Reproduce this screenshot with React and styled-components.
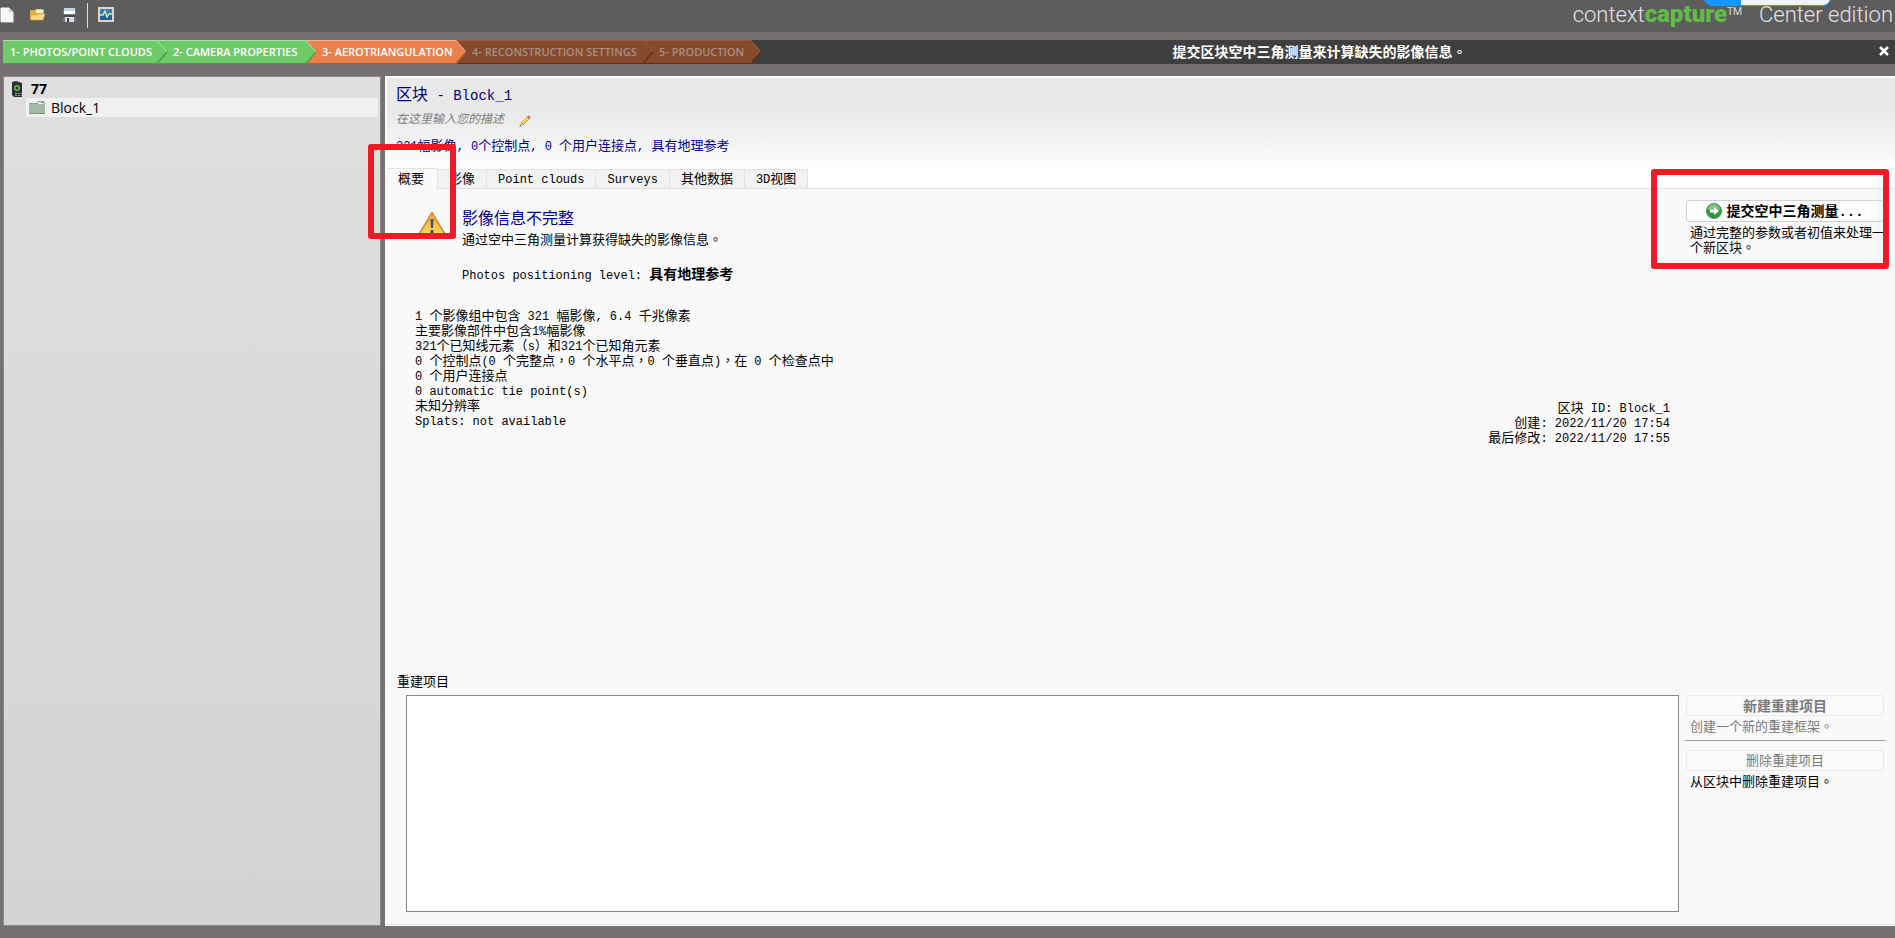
import React from 'react';
import styled, { createGlobalStyle, css } from 'styled-components';

const GlobalStyle = createGlobalStyle`
  *, *::before, *::after { box-sizing: border-box; }
  body {
    margin: 0;
    background: #757170;
    color: #000;
    font-family: "Liberation Sans", "Noto Sans CJK SC", sans-serif;
    font-size: 13px;
    line-height: 15px;
  }
  h1, h2, p, ul, ol, dl, dd { margin: 0; padding: 0; font-weight: normal; }
  ul, ol { list-style: none; }
  button { margin: 0; padding: 0; border: 0; background: none; color: inherit; font: inherit; }
`;

const Latin = styled.span`
  font-family: "Liberation Mono", monospace;
  font-size: ${(p) => p.$size}px;
  line-height: 0;
  white-space: pre-wrap;
`;

const Punctuation = styled.span`
  font-family: "Liberation Sans", "Noto Sans CJK TC", sans-serif;
  line-height: 0;
`;

/* Sets half-width runs in the fixed-width face and centres full-width stops. */
function Mixed({ children, size = 12 }) {
  return children
    .split(/([\x20-\x7e]+|[，。]+)/)
    .filter(Boolean)
    .map((run, i) => {
      if (/^[\x20-\x7e]/.test(run)) return <Latin key={i} $size={size}>{run}</Latin>;
      if (/^[，。]/.test(run)) return <Punctuation key={i} lang="zh-TW">{run}</Punctuation>;
      return run;
    });
}

const Window = styled.div`
  position: relative;
  display: flex;
  flex-direction: column;
  min-height: 100vh;
  padding-bottom: 12px;
  overflow: hidden;
`;

const Toolbar = styled.header`
  display: flex;
  align-items: center;
  justify-content: space-between;
  height: 32px;
  background: #5d5d5d;
`;

const Tools = styled.div`
  display: flex;
  align-items: center;
  height: 30px;
  align-self: flex-start;
`;

const ToolButton = styled.button`
  display: flex;
  align-items: flex-end;
  width: 16px;
  height: 16px;
  margin-right: ${(p) => p.$gap ?? 16}px;
`;

const ToolDivider = styled.span`
  width: 1px;
  height: 25px;
  margin-right: 10px;
  background: #dcdcdc;
`;

const Brand = styled.div`
  display: flex;
  align-items: baseline;
  padding: 0 2px 3px 0;
  color: #e2e2e2;
  font-family: Roboto, sans-serif;
  font-size: 22px;
  font-weight: 300;
  line-height: 24px;
`;

const BrandStrong = styled.strong`
  color: #62bd45;
  font-size: 24px;
  font-weight: 900;
`;

const Trademark = styled.span`
  align-self: flex-start;
  font-family: "Open Sans", sans-serif;
`;

const Edition = styled.span`
  margin-left: 16px;
`;

const FloatingChip = styled.div`
  position: absolute;
  top: -10px;
  right: 64px;
  width: 127px;
  height: 16px;
  border: 1px solid #1b9bf0;
  border-radius: 8px;
  background: linear-gradient(90deg, #1496ff 36px, #eef7ff 36px);
`;

const WorkflowBar = styled.nav`
  display: flex;
  align-items: center;
  height: 24px;
  margin: 8px 0 12px 3px;
  background: #3f3f3f;
  color: #fff;
`;

const Steps = styled.ol`
  display: flex;
  flex: none;
`;

const tones = {
  done: { fill: '#6fca69', light: '#a9e2a4', dark: '#519b4c', text: '#fff' },
  current: { fill: '#ea804b', light: '#f9b592', dark: '#b45a2c', text: '#fff' },
  pending: { fill: '#864a2c', light: '#9c5b3d', dark: '#5f3019', text: '#a48f84' },
};

const StepItem = styled.li`
  position: relative;
  display: flex;
  z-index: ${(p) => p.$layer};
  margin-right: -11px;
`;

const StepButton = styled.button`
  height: 24px;
  width: ${(p) => p.$width}px;
  padding-left: ${(p) => (p.$first ? 7 : 16)}px;
  border-top: 1px solid ${(p) => tones[p.$tone].light};
  border-bottom: 1px solid ${(p) => tones[p.$tone].dark};
  background: ${(p) => tones[p.$tone].fill};
  color: ${(p) => tones[p.$tone].text};
  font-family: "Open Sans", sans-serif;
  font-size: 11px;
  font-weight: 600;
  line-height: 22px;
  text-align: left;
  white-space: nowrap;
`;

const Message = styled.p`
  flex: 1;
  padding-left: 10px;
  text-align: center;
  font-size: 14px;
  font-weight: 700;
  line-height: 24px;
`;

const CloseButton = styled.button`
  display: flex;
  margin-right: 5px;
`;

const Workspace = styled.div`
  display: flex;
  flex: 1;
  gap: 4px;
  padding-left: 3px;
`;

const Sidebar = styled.aside`
  width: 378px;
  flex: none;
  padding: 2px;
  border: 1px solid #8a8786;
  background: linear-gradient(#dfdfdf, #d3d3d3);
  font-family: "Open Sans", sans-serif;
  font-size: 14px;
  line-height: 19px;
`;

const TreeRow = styled.li`
  display: flex;
  align-items: center;
  height: 19px;
  margin-left: ${(p) => p.$indent}px;
  gap: ${(p) => p.$gap}px;
  padding-left: ${(p) => p.$pad}px;
  font-weight: ${(p) => (p.$root ? 700 : 400)};
  ${(p) => p.$selected && css`background: #f0f0f0;`}
`;

const Panel = styled.main`
  display: flex;
  flex: 1;
  flex-direction: column;
  min-width: 0;
  border: 1px solid #fff;
  border-width: 2px 0 1px 2px;
  background: #f9f9f9;
`;

const PanelHead = styled.div`
  padding-top: 6px;
  background: linear-gradient(#e9e9e9 30%, #fff 85%);
`;

const BlockTitle = styled.h1`
  padding-left: 9px;
  color: #00008b;
  font-size: 16px;
  line-height: 22px;
`;

const Description = styled.div`
  display: flex;
  align-items: center;
  gap: 15px;
  height: 26px;
  padding-left: 9px;
  color: #7d7d7d;
  font-size: 12px;
  font-style: italic;
`;

const Summary = styled.p`
  padding: 6px 0 0 9px;
  color: #00008b;
  line-height: 16px;
`;

const Tabs = styled.div`
  display: flex;
  align-items: flex-end;
  height: 35px;
  border-bottom: 1px solid #e2e2e2;
`;

const Tab = styled.button`
  height: 19px;
  padding: 0 11px;
  border: 1px solid #e2e2e2;
  border-width: 1px 1px 0 0;
  background: #f2f2f2;
  line-height: 18px;
  ${(p) => p.$active && css`
    height: 21px;
    margin-bottom: -1px;
    padding-right: 13px;
    background: #f9f9f9;
  `}
`;

const Content = styled.div`
  display: flex;
  flex: 1;
  flex-direction: column;
  border-bottom: 1px solid #e2e2e2;
`;

const Columns = styled.div`
  display: flex;
  flex: ${(p) => (p.$grow ? 1 : 'none')};
`;

const MainColumn = styled.div`
  flex: 1;
  min-width: 0;
`;

const ActionColumn = styled.div`
  flex: none;
  width: 216px;
  padding: ${(p) => p.$top}px 11px 0 7px;
`;

const Notice = styled.section`
  display: flex;
  gap: 15px;
  padding: 19px 0 0 30px;
`;

const NoticeTitle = styled.h2`
  color: #00008b;
  font-size: 16px;
  line-height: 22px;
`;

const NoticeText = styled.p`
  line-height: 20px;
`;

const Positioning = styled.p`
  margin-top: 16px;
  line-height: 18px;
`;

const Strong = styled.strong`
  font-size: 14px;
  line-height: 0;
`;

const Facts = styled.div`
  display: flex;
  justify-content: space-between;
  padding: 24px 9px 0 28px;
`;

const FactList = styled.ul`
  padding-bottom: 17px;
`;

const Meta = styled.dl`
  align-self: flex-end;
  text-align: right;
`;

const Term = styled.dt`
  display: inline;
`;

const Value = styled.dd`
  display: inline;
`;

const ActionButton = styled.button`
  display: flex;
  align-items: center;
  justify-content: center;
  gap: 4px;
  width: 198px;
  height: 22px;
  border: 1px solid #d0d0d0;
  border-radius: 3px;
  background: #fdfdfd;
  font-size: 14px;
  font-weight: 700;
  line-height: 20px;
  &:disabled {
    height: 21px;
    border-color: #e9e9e9;
    background: #fafafa;
    color: #7b7b7b;
    line-height: 18px;
    ${(p) => p.$plain && css`font-size: 13px; font-weight: 400;`}
  }
`;

const ActionHint = styled.p`
  margin-right: -4px;
  padding: 3px 0 0 4px;
  color: ${(p) => (p.$muted ? '#7b7b7b' : '#000')};
`;

const ActionRule = styled.hr`
  height: 1px;
  margin: 6px -1px 9px;
  border: 0;
  background: #9a9a9a;
`;

const ListLabel = styled.h2`
  padding: 0 0 5px 10px;
  font-size: 13px;
  line-height: 16px;
`;

const ProjectList = styled.div`
  height: 217px;
  margin: 0 0 12px 19px;
  border: 1px solid #828790;
  background: #fff;
`;

const Marker = styled.div`
  position: absolute;
  z-index: 10;
  border: 6px solid #ed1c24;
  border-radius: 3px;
  pointer-events: none;
`;

const TabMarker = styled(Marker)`
  top: 144px;
  left: 368px;
  width: 88px;
  height: 95px;
`;

const SubmitMarker = styled(Marker)`
  top: 169px;
  right: 6px;
  width: 238px;
  height: 100px;
`;

const NewIcon = () => (
  <svg width="16" height="16" viewBox="0 0 16 16">
    <path d="M1 1h8l4 4v10H1z" fill="#f7f7f7" stroke="#fff" />
    <path d="M9 1v4h4z" fill="#c9c9c9" />
    <path d="M1 15.500h13V6" fill="none" stroke="#8b8b8b" strokeOpacity=".6" />
  </svg>
);

const OpenIcon = () => (
  <svg width="16" height="16" viewBox="0 0 16 16">
    <path d="M0 13V4l1-1h4l1-1h7l1 1v5z" fill="#e2b04b" />
    <path d="M6 3l6-1 1 1v3H6z" fill="#f7ecc2" />
    <path d="M11 2h2v1h-2z" fill="#5db4e6" />
    <path d="M1 13V8h6l2-1h6l-2 6z" fill="#f7d98a" stroke="#d9a544" strokeWidth=".7" />
  </svg>
);

const SaveIcon = () => (
  <svg width="16" height="16" viewBox="0 0 16 16">
    <path d="M1 2h13v12l-1 1H2l-1-1z" fill="#73777c" />
    <path d="M2 1h11v6H2z" fill="#bcd3ea" />
    <path d="M2 4h11v3H2z" fill="#fff" />
    <path d="M1 8h13v2H1z" fill="#4b4e52" />
    <path d="M3 10h9v5H3z" fill="#dadde0" />
    <path d="M5 11h2v4H5z" fill="#3f4245" />
  </svg>
);

const MonitorIcon = () => (
  <svg width="16" height="16" viewBox="0 0 16 16">
    <path d="M0 0h16v15H0z" fill="#d8d6d2" />
    <path d="M2 2h12v11H2z" fill="#235d93" />
    <path d="M2 2h12v4L2 9z" fill="#3c7cae" />
    <path d="M2 8h3l2-4 2 6 2-3h3" fill="none" stroke="#dcefb8" strokeWidth="1.300" />
  </svg>
);

const ProjectIcon = () => (
  <svg width="12" height="16" viewBox="0 0 12 16">
    <path d="M1 1l4-1 6 2v14H3l-2-2z" fill="#2b2f2e" />
    <circle cx="6" cy="7" r="2.300" fill="none" stroke="#66bd55" strokeWidth="1.500" />
    <path d="M4 12.500h7M4 14.500h7" stroke="#c9cccb" strokeOpacity=".7" strokeDasharray="2 1" />
  </svg>
);

const FolderIcon = () => (
  <svg width="16" height="14" viewBox="0 0 16 14">
    <path d="M0 2h8l1-2h6l1 2v11H0z" fill="#8fa48f" />
    <path d="M9 1h6v2H9z" fill="#e6eef0" />
    <path d="M12 1h3v1h-3z" fill="#49a9df" />
    <path d="M0 3h16v9.500H0z" fill="#a6bba6" />
    <path d="M0 12h16v1H0z" fill="#809680" />
  </svg>
);

const PencilIcon = () => (
  <svg width="12" height="12" viewBox="0 0 12 12">
    <path d="M2 8l6-6 2 2-6 6z" fill="#f6cf42" stroke="#b98325" strokeWidth=".7" />
    <path d="M8 2l1-1.500h1L11.500 2v1L10 4z" fill="#d9746c" />
    <path d="M3 8l5-5" stroke="#fff2a8" />
    <path d="M.5 11.500L2 8l2 2z" fill="#e2a08a" />
    <path d="M.5 11.500l.6-1.600 1 1z" fill="#3a2420" />
  </svg>
);

const WarningIcon = () => (
  <svg width="30" height="30" viewBox="0 0 30 30">
    <defs>
      <linearGradient id="warn" x1="0" y1="0" x2="0" y2="1">
        <stop offset="0" stopColor="#f7a521" />
        <stop offset="1" stopColor="#ffda62" />
      </linearGradient>
    </defs>
    <path d="M15 4.500L29 28H1z" fill="url(#warn)" stroke="#c98d4c" strokeWidth="1.500" strokeLinejoin="round" />
    <path d="M13.500 11h3l-.5 9h-2zM13.500 22h3v3h-3z" fill="#465262" />
  </svg>
);

const GoIcon = () => (
  <svg width="16" height="16" viewBox="0 0 16 16">
    <circle cx="8" cy="8" r="7.500" fill="#2c9a39" stroke="#4d8f55" />
    <path d="M2 7a6 6 0 0 1 12 0q-6-2-12 0z" fill="#7fc586" />
    <path d="M4 6.500h4V4l5 4-5 4V9.500H4z" fill="#fff" />
  </svg>
);

const CloseIcon = () => (
  <svg width="12" height="12" viewBox="0 0 12 12">
    <path d="M2 1l8 8M10 1l-8 8" stroke="#fff" strokeWidth="2.500" />
  </svg>
);

function ArrowHead({ tone }) {
  const t = tones[tone];
  return (
    <svg width="11" height="24" viewBox="0 0 11 24" aria-hidden="true">
      <path d="M0 0L10 12 0 24z" fill={t.fill} />
      <path d="M0 .5L10 12" stroke={t.light} fill="none" />
      <path d="M10 12L0 23.500" stroke={t.dark} strokeWidth="1.500" fill="none" />
    </svg>
  );
}

const steps = [
  { label: '1- PHOTOS/POINT CLOUDS', tone: 'done', width: 154 },
  { label: '2- CAMERA PROPERTIES', tone: 'done', width: 149 },
  { label: '3- AEROTRIANGULATION', tone: 'current', width: 150 },
  { label: '4- RECONSTRUCTION SETTINGS', tone: 'pending', width: 187 },
  { label: '5- PRODUCTION', tone: 'pending', width: 108 },
];

const tabs = ['概要', '影像', 'Point clouds', 'Surveys', '其他数据', '3D视图'];

const facts = [
  '1 个影像组中包含 321 幅影像, 6.4 千兆像素',
  '主要影像部件中包含1%幅影像',
  '321个已知线元素（s）和321个已知角元素',
  '0 个控制点(0 个完整点，0 个水平点，0 个垂直点)，在 0 个检查点中',
  '0 个用户连接点',
  '0 automatic tie point(s)',
  '未知分辨率',
  'Splats: not available',
];

const meta = [
  ['区块 ID:', ' Block_1'],
  ['创建:', ' 2022/11/20 17:54'],
  ['最后修改:', ' 2022/11/20 17:55'],
];

export default function App() {
  return (
    <Window lang="zh-CN">
      <GlobalStyle />
      <Toolbar>
        <Tools>
          <ToolButton aria-label="New" $gap={14}><NewIcon /></ToolButton>
          <ToolButton aria-label="Open"><OpenIcon /></ToolButton>
          <ToolButton aria-label="Save" $gap={9}><SaveIcon /></ToolButton>
          <ToolDivider />
          <ToolButton aria-label="Job monitor"><MonitorIcon /></ToolButton>
        </Tools>
        <Brand>
          context<BrandStrong>capture</BrandStrong><Trademark>™</Trademark>
          <Edition>Center edition</Edition>
        </Brand>
      </Toolbar>
      <FloatingChip />

      <WorkflowBar aria-label="Workflow">
        <Steps>
          {steps.map((s, i) => (
            <StepItem key={s.label} $layer={steps.length - i}>
              <StepButton $tone={s.tone} $first={i === 0} $width={s.width}>{s.label}</StepButton>
              <ArrowHead tone={s.tone} />
            </StepItem>
          ))}
        </Steps>
        <Message><Mixed>提交区块空中三角测量来计算缺失的影像信息。</Mixed></Message>
        <CloseButton aria-label="Close"><CloseIcon /></CloseButton>
      </WorkflowBar>

      <Workspace>
        <Sidebar>
          <ul>
            <TreeRow $root $indent={0} $pad={5} $gap={8}><ProjectIcon />77</TreeRow>
            <TreeRow $selected $indent={20} $pad={3} $gap={6}><FolderIcon />Block_1</TreeRow>
          </ul>
        </Sidebar>

        <Panel>
          <PanelHead>
            <BlockTitle><Mixed size={14}>区块 - Block_1</Mixed></BlockTitle>
            <Description>
              在这里输入您的描述
              <ToolButton aria-label="Edit description"><PencilIcon /></ToolButton>
            </Description>
            <Summary><Mixed>321幅影像, 0个控制点, 0 个用户连接点, 具有地理参考</Mixed></Summary>
            <Tabs role="tablist">
              {tabs.map((t, i) => (
                <Tab key={t} role="tab" aria-selected={i === 0} $active={i === 0}><Mixed>{t}</Mixed></Tab>
              ))}
            </Tabs>
          </PanelHead>

          <Content>
            <Columns $grow>
              <MainColumn>
                <Notice>
                  <WarningIcon />
                  <div>
                    <NoticeTitle>影像信息不完整</NoticeTitle>
                    <NoticeText><Mixed>通过空中三角测量计算获得缺失的影像信息。</Mixed></NoticeText>
                    <Positioning><Mixed>Photos positioning level: </Mixed><Strong>具有地理参考</Strong></Positioning>
                  </div>
                </Notice>
                <Facts>
                  <FactList>
                    {facts.map((f) => <li key={f}><Mixed>{f}</Mixed></li>)}
                  </FactList>
                  <Meta>
                    {meta.map(([k, v]) => (
                      <div key={k}>
                        <Term><Mixed>{k}</Mixed></Term>
                        <Value><Mixed>{v}</Mixed></Value>
                      </div>
                    ))}
                  </Meta>
                </Facts>
              </MainColumn>
              <ActionColumn $top={11}>
                <ActionButton><GoIcon /><span>提交空中三角测量<Latin $size={14}>...</Latin></span></ActionButton>
                <ActionHint><Mixed>通过完整的参数或者初值来处理一个新区块。</Mixed></ActionHint>
              </ActionColumn>
            </Columns>

            <Columns>
              <MainColumn>
                <ListLabel id="projects">重建项目</ListLabel>
                <ProjectList role="listbox" aria-labelledby="projects" />
              </MainColumn>
              <ActionColumn $top={21}>
                <ActionButton disabled>新建重建项目</ActionButton>
                <ActionHint $muted><Mixed>创建一个新的重建框架。</Mixed></ActionHint>
                <ActionRule />
                <ActionButton disabled $plain>删除重建项目</ActionButton>
                <ActionHint><Mixed>从区块中删除重建项目。</Mixed></ActionHint>
              </ActionColumn>
            </Columns>
          </Content>
        </Panel>
      </Workspace>

      <TabMarker />
      <SubmitMarker />
    </Window>
  );
}
